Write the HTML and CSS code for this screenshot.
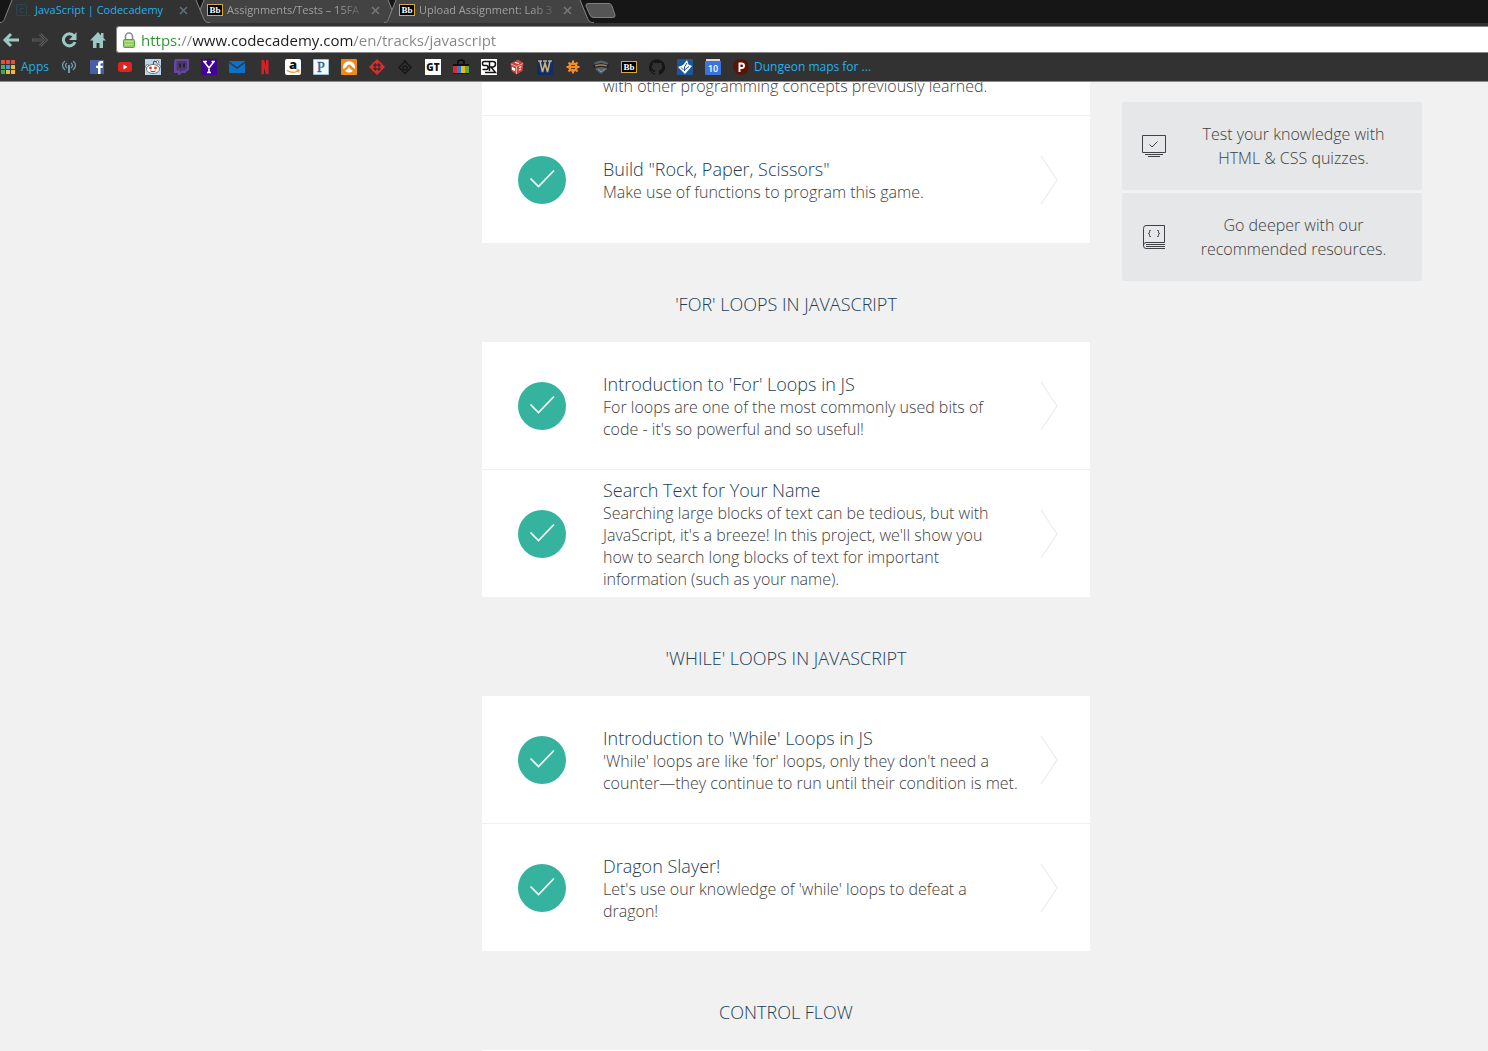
FILE: index.html
```html
<!DOCTYPE html>
<html lang="en">
<head>
<meta charset="utf-8">
<meta name="viewport" content="width=device-width, initial-scale=1">
<title>JavaScript | Codecademy</title>
<link rel="stylesheet" href="styles.css">
</head>
<body>
<svg class="defs" aria-hidden="true">
  <symbol id="i-check" viewBox="0 0 48 48"><circle cx="24" cy="24" r="24" fill="#36b39e"/><path d="M12.500 22.500 20.500 30.500 36 14.500" fill="none" stroke="#fff" stroke-width="1.700"/></symbol>
  <symbol id="i-chevron" viewBox="0 0 18 48"><path d="M1 0 17 24 1 48" fill="none" stroke="#ececec" stroke-width="1.200"/></symbol>
  <symbol id="i-close" viewBox="0 0 9 9"><path d="M1 1 8 8M8 1 1 8" fill="none" stroke="currentColor" stroke-width="1.600"/></symbol>
  <symbol id="i-tab" viewBox="0 0 210 23"><path d="M0 23C4 23 4 20 6 15L12 0H196L203 17C205 22 206 23 210 23Z" fill="var(--tab)"/><path d="M0 22.500C4 22.500 4 20 6 15L12 0M196 0 203 17C205 22 206 22.500 210 22.500" fill="none" stroke="#858585"/></symbol>
</svg>

<header class="browser">
  <nav class="tabs" aria-label="Tabs">
    <div class="tab tab--active">
      <svg class="tab__shape"><use href="#i-tab"/></svg>
      <svg class="icon" viewBox="0 0 16 16"><rect x="1.500" y="2.500" width="10" height="11" rx="1" fill="none" stroke="#2b4452"/><path d="M8.500 6.500H5v4h3.500M13 13.500h3" fill="none" stroke="#2b4452"/></svg>
      <a class="tab__title" href="#">JavaScript | Codecademy</a>
      <button class="tab__close" aria-label="Close tab"><svg><use href="#i-close"/></svg></button>
    </div>
    <div class="tab">
      <svg class="tab__shape"><use href="#i-tab"/></svg>
      <svg class="icon" viewBox="0 0 16 16"><rect x=".5" y="2.500" width="15" height="11" fill="#000" stroke="#d9a93c"/><text class="bb" x="8" y="11">Bb</text></svg>
      <a class="tab__title" href="#">Assignments/Tests – 15FA</a>
      <button class="tab__close" aria-label="Close tab"><svg><use href="#i-close"/></svg></button>
    </div>
    <div class="tab">
      <svg class="tab__shape"><use href="#i-tab"/></svg>
      <svg class="icon" viewBox="0 0 16 16"><rect x=".5" y="2.500" width="15" height="11" fill="#000" stroke="#d9a93c"/><text class="bb" x="8" y="11">Bb</text></svg>
      <a class="tab__title" href="#">Upload Assignment: Lab 3</a>
      <button class="tab__close" aria-label="Close tab"><svg><use href="#i-close"/></svg></button>
    </div>
    <button class="new-tab" aria-label="New tab"><svg viewBox="0 0 31 15"><path d="M3 .5H24Q26 .5 27 3L30 12Q30.500 14.500 28 14.500H8Q6 14.500 5 12L1 3Q.5.5 3 .5Z" fill="#555" stroke="#808080"/></svg></button>
  </nav>

  <div class="toolbar">
    <button class="tool" aria-label="Back"><svg viewBox="0 0 18 18"><path d="M9 3 3 9l6 6M3 9h14" fill="none" stroke="#9cc9c6" stroke-width="3"/></svg></button>
    <button class="tool" aria-label="Forward"><svg viewBox="0 0 18 18"><path d="M9 3l6 6-6 6M15 9H1" fill="none" stroke="#5a5a5a" stroke-width="3"/><path d="M9 3l6 6-6 6M14 9H2" fill="none" stroke="#363636"/></svg></button>
    <button class="tool" aria-label="Reload"><svg viewBox="0 0 18 18"><path d="M14 5A6 6 0 1 0 15 11" fill="none" stroke="#9cc9c6" stroke-width="3"/><path d="M16.500 1V9H9Z" fill="#9cc9c6"/></svg></button>
    <button class="tool" aria-label="Home"><svg viewBox="0 0 18 18"><path d="M9 1 1 9.500H4V17H7.500V12H10.500V17H14V9.500H17L14.500 7V2H12V4.500Z" fill="#9cc9c6"/></svg></button>
    <div class="address">
      <svg class="lock" viewBox="0 0 12 16"><path d="M2.500 8V4.500a3.500 3.500 0 0 1 7 0V8" fill="none" stroke="#8b8b8b" stroke-width="1.600"/><rect x=".5" y="7.500" width="11" height="8" rx="1" fill="#93cf66" stroke="#5fa035"/><path d="M2 9.500h8M2 12.500h8" stroke="#b7e394"/></svg>
      <input class="address__input" type="text" aria-label="Address" value="https://www.codecademy.com/en/tracks/javascript">
    </div>
  </div>

  <nav class="bookmarks" aria-label="Bookmarks">
    <a class="bookmark" href="#"><svg class="apps" viewBox="0 0 14 14"><path d="M0 0h4v4H0zM5 0h4v4H5zM10 0h4v4h-4z" fill="#e0503f"/><path d="M0 5h4v4H0z" fill="#4caf50"/><path d="M5 5h4v4H5z" fill="#4a90e2"/><path d="M10 5h4v4h-4zM5 10h4v4H5zM10 10h4v4h-4z" fill="#f0b93a"/><path d="M0 10h4v4H0z" fill="#3fa65a"/></svg>Apps</a>
    <a href="#" aria-label="Radio"><svg class="icon" viewBox="0 0 16 16" fill="none" stroke="#6fa0b0" stroke-width="1.300"><path d="M4 2Q-1 6 4 11M12 2Q17 6 12 11M6 4Q3 6.500 6 9M10 4Q13 6.500 10 9"/><path d="M8 6V14" stroke-width="2"/></svg></a>
    <a href="#" aria-label="Facebook"><svg class="icon" viewBox="0 0 16 16"><path d="M1 1h14v14H1z" fill="#4760a5"/><path d="M9 15V9H7V6.700h2V5q0-3 3-3h2v2.300h-1.500q-1 0-1 1v1.400H14L13.500 9h-2v6Z" fill="#fff"/></svg></a>
    <a href="#" aria-label="YouTube"><svg class="icon" viewBox="0 0 16 16"><rect x="1" y="3" width="14" height="10" rx="2.500" fill="#df2420"/><path d="M6.500 5.500v5l4-2.500Z" fill="#fff"/></svg></a>
    <a href="#" aria-label="Reddit"><svg class="icon" viewBox="0 0 16 16"><path d="M0 0h16v16H0z" fill="#bdd5ea"/><path d="M8 6 9 2l3 1" fill="none" stroke="#444"/><g fill="#fff" stroke="#555" stroke-width=".8"><circle cx="2.500" cy="7.500" r="1.800"/><circle cx="13.500" cy="7.500" r="1.800"/><circle cx="12.500" cy="3" r="1.300"/><ellipse cx="8" cy="10" rx="6.500" ry="4.500"/></g><circle cx="5.500" cy="9" r="1.400" fill="#e33b1c"/><circle cx="10.500" cy="9" r="1.400" fill="#e33b1c"/><path d="M5.500 12q2.500 1.500 5 0" fill="none" stroke="#444"/></svg></a>
    <a href="#" aria-label="Twitch"><svg class="icon" viewBox="0 0 16 16"><path d="M2 0H16V10.500L12 14H9L6.500 16H5V14H1V3Z" fill="#6647a0"/><path d="M3.500 2h10.500v7.500l-2 2H9l-2 2v-2H3.500Z" fill="#4a3a66"/><path d="M7 4.500v4M11 4.500v4" stroke="#241a38" stroke-width="1.800"/></svg></a>
    <a href="#" aria-label="Yahoo"><svg class="icon" viewBox="0 0 16 16"><path d="M0 0h16v16H0z" fill="#430297"/><path d="M3 2.500 8 9l5-6.500M8 8.500V14M2 2.500h4M10.500 2.500H14M6 13.500h4" fill="none" stroke="#fff" stroke-width="1.600"/></svg></a>
    <a href="#" aria-label="Mail"><svg class="icon" viewBox="0 0 16 16"><path d="M0 2h16v12H0z" fill="#0c72c6"/><path d="M0 3l8 6 8-6" fill="none" stroke="#2b3a46" stroke-width="1.400"/></svg></a>
    <a href="#" aria-label="Netflix"><svg class="icon" viewBox="0 0 16 16"><path d="M4.500 1h2.500l2 6.500V1H11.500V15.500L9 15 7 8.500V15L4.500 15.500Z" fill="#da1f26"/></svg></a>
    <a href="#" aria-label="Amazon"><svg class="icon" viewBox="0 0 16 16"><rect width="16" height="16" rx="2" fill="#fff"/><text x="8" y="10" text-anchor="middle" font-family="Open Sans, sans-serif" font-weight="800" font-size="13" fill="#111">a</text><path d="M2 11.500q6 3.500 11 .5M11.500 11h2.500l-.5 2.500" fill="none" stroke="#f39a1e" stroke-width="1.300"/></svg></a>
    <a href="#" aria-label="Pandora"><svg class="icon" viewBox="0 0 16 16"><path d="M.5.5h15v15H.5z" fill="#f5f9fc" stroke="#9ec0da"/><text x="8" y="13" text-anchor="middle" font-family="Liberation Serif, serif" font-size="14" fill="#315f94" stroke="#315f94" stroke-width=".4">P</text></svg></a>
    <a href="#" aria-label="Grooveshark"><svg class="icon" viewBox="0 0 16 16"><rect width="16" height="16" rx="1" fill="#ee8a17"/><path d="M2.300 10A6 6 0 1 1 13.700 10Q11 8 9.500 6 8 5 6.500 6.500 5 9 2.300 10Z" fill="#fff"/><path d="M4 12Q6.500 10.500 8 8 9.500 10.500 12 12 8 15 4 12Z" fill="#fff"/></svg></a>
    <a href="#" aria-label="Rooster Teeth"><svg class="icon" viewBox="0 0 16 16"><g fill="#df2b2b"><path d="M8 0l2.500 2.500L8 6 5.500 2.500ZM8 10l2.500 3.500L8 16l-2.500-2.500ZM0 8l2.500-2.500L6 8l-3.500 2.500ZM10 8l3.500-2.500L16 8l-2.500 2.500Z"/><circle cx="8" cy="8" r="1.500"/></g><circle cx="8" cy="8" r="5" fill="none" stroke="#df2b2b" stroke-width="2"/></svg></a>
    <a href="#" aria-label="Diamond"><svg class="icon" viewBox="0 0 16 16" fill="none" stroke="#171717" stroke-width="1.500"><path d="M8 2.500 14 8.500l-6 6-6-6ZM7 1l3 3"/><circle cx="8" cy="9" r="2"/></svg></a>
    <a href="#" aria-label="GameTrailers"><svg class="icon" viewBox="0 0 16 16"><path d="M0 0h16v16H0z" fill="#fff"/><text x="8" y="12" text-anchor="middle" font-family="Open Sans, sans-serif" font-weight="800" font-size="10" fill="#111">GT</text></svg></a>
    <a href="#" aria-label="Shop"><svg class="icon" viewBox="0 0 16 16"><path d="M5 5V2q3-2 6 0v3" fill="none" stroke="#080808" stroke-width="1.500"/><path d="M0 5h16v10H0z" fill="#111"/><path d="M0 7h4v7H0z" fill="#d82b2b"/><path d="M4 7h4v7H4z" fill="#287ddc"/><path d="M8 7h4v7H8z" fill="#efb51f"/><path d="M12 7h4v7h-4z" fill="#64a936"/></svg></a>
    <a href="#" aria-label="Screen Rant"><svg class="icon" viewBox="0 0 16 16"><path d="M0 0h16v16H0z" fill="#fff"/><path d="M8 2.500H3Q1.500 2.500 1.500 4.500T3 6.500H5.500Q7 6.500 7 8.500T5.500 10.500H1.500M8.500 12V2.500h3.500q2.500 0 2.500 2.500T12 8h-2l4.500 5.500H4" fill="none" stroke="#111" stroke-width="1.500"/></svg></a>
    <a href="#" aria-label="Dice"><svg class="icon" viewBox="0 0 16 16"><path d="M1.500 4.500 9 .5 14.500 4 13.500 12 7.500 15.500 2.500 12Z" fill="#c8453c"/><path d="M2 5l5.500 2.500L14 4.500M7.500 7.500V15" fill="none" stroke="#e9a8a2"/><path d="M3.500 8v3M5.500 9v3M3.500 8l2 4M10 8.500l2.500-1M10 11l2-1M6 3.500l4 1" fill="none" stroke="#fff" stroke-width="1.200"/></svg></a>
    <a href="#" aria-label="Wowhead"><svg class="icon" viewBox="0 0 16 16"><path d="M0 0h16v16H0z" fill="#142c68"/><path d="M1 2h4M6 2h4M11 2h4M3 2l2.500 11L8 4l2.500 9L13 2" fill="none" stroke="#c9af79" stroke-width="1.600"/></svg></a>
    <a href="#" aria-label="Gear"><svg class="icon" viewBox="0 0 16 16"><circle cx="8" cy="8" r="4.800" fill="#f58b25"/><path d="M8 1.500v13M1.500 8h13M3.500 3.500l9 9M12.500 3.500l-9 9" stroke="#f58b25" stroke-width="2"/><path d="M6 6.500h4M6 9.500h4" stroke="#5a3a20"/></svg></a>
    <a href="#" aria-label="Shield"><svg class="icon" viewBox="0 0 16 16"><path d="M1 4Q8-1 15 4L14 10 8 15 3 11Z" fill="#56616a"/><path d="M0 6 8 4 16 6 15 9 8 8 1 9Z" fill="#222"/><path d="M2 7q6-2 12 0" fill="none" stroke="#a38655" stroke-width="1.300"/><path d="M5 10l3 3 4-3" fill="none" stroke="#8f9aa2"/></svg></a>
    <a href="#" aria-label="Blackboard"><svg class="icon" viewBox="0 0 16 16"><rect x=".5" y="2.500" width="15" height="11" fill="#000" stroke="#d9a93c"/><text class="bb" x="8" y="11">Bb</text></svg></a>
    <a href="#" aria-label="GitHub"><svg class="icon" viewBox="0 0 16 16"><path d="M8 .2a8 8 0 0 0-2.500 15.600c.4 0 .5-.2.500-.4v-1.500c-2.200.5-2.700-1-2.700-1-.4-.9-.9-1.200-.9-1.200-.7-.5.1-.5.1-.5.800.1 1.200.8 1.200.8.700 1.300 1.900.9 2.300.7.100-.5.300-.9.500-1.100-1.800-.2-3.600-.9-3.600-4 0-.9.300-1.600.8-2.100-.1-.2-.4-1 .1-2.100 0 0 .7-.2 2.200.8a7.500 7.500 0 0 1 4 0c1.500-1 2.200-.8 2.200-.8.400 1.100.2 1.900.1 2.100.5.600.8 1.300.8 2.100 0 3.100-1.900 3.700-3.600 3.900.3.300.5.800.5 1.500v2.400c0 .2.100.5.600.4A8 8 0 0 0 8 .2Z" fill="#161616"/></svg></a>
    <a href="#" aria-label="Leaf"><svg class="icon" viewBox="0 0 16 16"><path d="M0 0h16v16H0z" fill="#1d5799"/><path d="M8 15 1 8 5 6.500 6.500 5.500 10 1 11.500 5.500 15 7Z" fill="#fff"/><path d="M7.500 12V8l2.500-4M7.500 11l4.500-3.500M4 8.500l2.500 2.500" fill="none" stroke="#1d5799"/></svg></a>
    <a href="#" aria-label="Calendar"><svg class="icon" viewBox="0 0 16 16"><path d="M1 0h14v2H1z" fill="#d8d8d8"/><path d="M0 2h16v13q0 1-1 1H1q-1 0-1-1Z" fill="#3c74de"/><text x="8" y="13" text-anchor="middle" font-family="Roboto, sans-serif" font-weight="500" font-size="9" fill="#fff">10</text></svg></a>
    <a class="bookmark bookmark--last" href="#"><svg class="icon" viewBox="0 0 16 16"><circle cx="8" cy="8" r="8" fill="#581608"/><path d="M6.500 13V4.500h2q2.500 0 2.500 2.300T8.500 9H6.500" fill="none" stroke="#fff" stroke-width="1.900"/></svg>Dungeon maps for ...</a>
  </nav>
</header>

<div class="page">
  <main class="course">
    <div class="card">
      <p class="lesson-rest">with other programming concepts previously learned.</p>
      <a class="lesson" href="#">
        <svg class="lesson__status"><use href="#i-check"/></svg>
        <div class="lesson__text"><h3>Build "Rock, Paper, Scissors"</h3><p>Make use of functions to program this game.</p></div>
        <svg class="lesson__arrow"><use href="#i-chevron"/></svg>
      </a>
    </div>

    <h2 class="unit">'For' Loops in JavaScript</h2>
    <div class="card">
      <a class="lesson" href="#">
        <svg class="lesson__status"><use href="#i-check"/></svg>
        <div class="lesson__text"><h3>Introduction to 'For' Loops in JS</h3><p>For loops are one of the most commonly used bits of<br>code - it's so powerful and so useful!</p></div>
        <svg class="lesson__arrow"><use href="#i-chevron"/></svg>
      </a>
      <a class="lesson" href="#">
        <svg class="lesson__status"><use href="#i-check"/></svg>
        <div class="lesson__text"><h3>Search Text for Your Name</h3><p>Searching large blocks of text can be tedious, but with<br>JavaScript, it's a breeze! In this project, we'll show you<br>how to search long blocks of text for important<br>information (such as your name).</p></div>
        <svg class="lesson__arrow"><use href="#i-chevron"/></svg>
      </a>
    </div>

    <h2 class="unit">'While' Loops in JavaScript</h2>
    <div class="card">
      <a class="lesson" href="#">
        <svg class="lesson__status"><use href="#i-check"/></svg>
        <div class="lesson__text"><h3>Introduction to 'While' Loops in JS</h3><p>'While' loops are like 'for' loops, only they don't need a<br>counter—they continue to run until their condition is met.</p></div>
        <svg class="lesson__arrow"><use href="#i-chevron"/></svg>
      </a>
      <a class="lesson" href="#">
        <svg class="lesson__status"><use href="#i-check"/></svg>
        <div class="lesson__text"><h3>Dragon Slayer!</h3><p>Let's use our knowledge of 'while' loops to defeat a<br>dragon!</p></div>
        <svg class="lesson__arrow"><use href="#i-chevron"/></svg>
      </a>
    </div>

    <h2 class="unit">Control Flow</h2>
    <div class="card card--next"></div>
  </main>

  <aside class="extras">
    <a class="extra" href="#">
      <svg viewBox="0 0 24 24" fill="none" stroke="#3e4146"><path d="M.5 1.500h23v17H.5zM3 20.500h18M6 22.500h12"/><path d="M7.500 10.500l2.500 2.500 5.500-5.500"/></svg>
      <span>Test your knowledge with<br>HTML &amp; CSS quizzes.</span>
    </a>
    <a class="extra" href="#">
      <svg viewBox="0 0 24 24" fill="none" stroke="#3e4146"><path d="M1.500 21V3.500Q1.500.5 4 .5H22.500V17.500H4Q1.500 17.500 1.500 20.500T4 23.500H23M4 19.500H23M4 21.500H23"/><path d="M9 5.500H7.500V8L6 8.500l1.500.5v2.500H9M15 5.500h1.500V8l1.500.5-1.500.5v2.500H15" stroke-width=".8"/></svg>
      <span>Go deeper with our<br>recommended resources.</span>
    </a>
  </aside>
</div>
</body>
</html>
```
FILE: styles.css
```css
* { box-sizing: border-box; }

body {
  margin: 0;
  height: 100vh;
  display: flex;
  flex-direction: column;
  overflow: hidden;
  background: #f1f1f1;
  font-family: "Open Sans", "Noto Sans", sans-serif;
}

h2, h3, p { margin: 0; font-weight: 300; }
a { color: inherit; text-decoration: none; }
button { padding: 0; border: 0; background: none; color: inherit; }
svg { display: block; flex: none; }
.defs { position: absolute; width: 0; height: 0; }
.icon { width: 16px; height: 16px; }
.bb {
  font: 700 9px "Liberation Serif", serif;
  text-anchor: middle;
  fill: #fff;
}

/* Browser frame */
.browser {
  flex: none;
  background: #323232;
  border-bottom: 1px solid #8a8a8a;
  font-size: 12px;
  line-height: 16px;
}

.tabs {
  display: flex;
  height: 23px;
  padding-bottom: 1px;
  background: #161616;
  font-size: 11px;
}

.tab {
  --tab: #434343;
  position: relative;
  display: flex;
  align-items: center;
  gap: 4px;
  width: 192px;
  padding: 0 4px 2px 15px;
  color: #a0a0a0;
}
.tab--active { --tab: #323232; z-index: 1; color: #22aff0; }
.tab--active .tab__title { mask: none; }
.tab--active .tab__close { color: #5d7178; }
.tab > * { position: relative; }
.tab > .tab__shape { position: absolute; left: 0; top: 0; width: 210px; height: 23px; }
.tab__title {
  flex: 1;
  white-space: nowrap;
  mask: linear-gradient(90deg, #000 80%, transparent);
}
.tab__close { width: 9px; height: 9px; color: #777; }
.tab__close svg { width: 9px; height: 9px; }
.new-tab { align-self: flex-start; margin: 3px 0 0 9px; }
.new-tab svg { width: 31px; height: 15px; }

.toolbar {
  display: flex;
  align-items: center;
  gap: 11px;
  height: 30px;
  padding: 3px 0 0 2px;
}
.tool svg { width: 18px; height: 18px; }
.address {
  flex: 1;
  display: flex;
  align-items: center;
  gap: 6px;
  height: 27px;
  margin-left: -2px;
  padding-left: 6px;
  background: #fff;
  border: 1px solid #858585;
  border-right: 0;
  border-radius: 3px 0 0 3px;
}
.lock { width: 12px; height: 16px; }
.address__input {
  flex: 1;
  height: 22px;
  padding: 0;
  border: 0;
  outline: 0;
  font: 15px/22px "Open Sans", "Noto Sans", sans-serif;
  color: transparent;
  background: linear-gradient(90deg, #2d922d 39px, #888 39px 52px, #1c1c1c 52px 213px, #858585 213px);
  -webkit-background-clip: text;
  background-clip: text;
}

.bookmarks {
  display: flex;
  align-items: center;
  gap: 12px;
  height: 28px;
  padding-left: 1px;
  color: #22aff0;
}
.bookmark { display: flex; align-items: center; gap: 6px; white-space: nowrap; }
.bookmark--last { gap: 5px; }
.apps { width: 14px; height: 14px; }

/* Track page */
.page {
  flex: 1;
  min-height: 0;
  overflow: hidden;
  display: grid;
  grid-template-columns: 608fr 300fr;
  align-items: start;
  gap: 32px;
  padding: 0 66px 0 482px;
}

.card { background: #fff; }
.lesson-rest {
  height: 34px;
  padding: 0 0 18px 121px;
  display: flex;
  align-items: flex-end;
  overflow: hidden;
  border-bottom: 1px solid #f0f0f0;
}
.lesson {
  display: flex;
  align-items: center;
  min-height: 127px;
  padding: 0 32px 0 36px;
}
.lesson + .lesson { border-top: 1px solid #f0f0f0; min-height: 128px; }
.lesson__status { width: 48px; height: 48px; margin-right: 37px; }
.lesson__text { flex: 1; min-width: 0; white-space: nowrap; }
.lesson__arrow { width: 18px; height: 48px; }
.lesson h3 { font-size: 18px; line-height: 24px; color: #204056; }
.lesson p, .lesson-rest { font-size: 16px; line-height: 22px; color: #404040; }

.unit {
  padding: 49px 0 26px;
  font-size: 18px;
  line-height: 24px;
  text-align: center;
  text-transform: uppercase;
  color: #204056;
}
.card--next { min-height: 127px; }

.extras {
  display: flex;
  flex-direction: column;
  gap: 3px;
  padding-top: 20px;
}
.extra {
  display: flex;
  align-items: center;
  min-height: 88px;
  padding: 0 20px;
  background: #e6e7e8;
  border-radius: 2px;
  font-size: 16px;
  font-weight: 300;
  line-height: 24px;
  color: #404040;
}
.extra svg { width: 24px; height: 24px; }
.extra span { flex: 1; padding-left: 19px; text-align: center; }
```
